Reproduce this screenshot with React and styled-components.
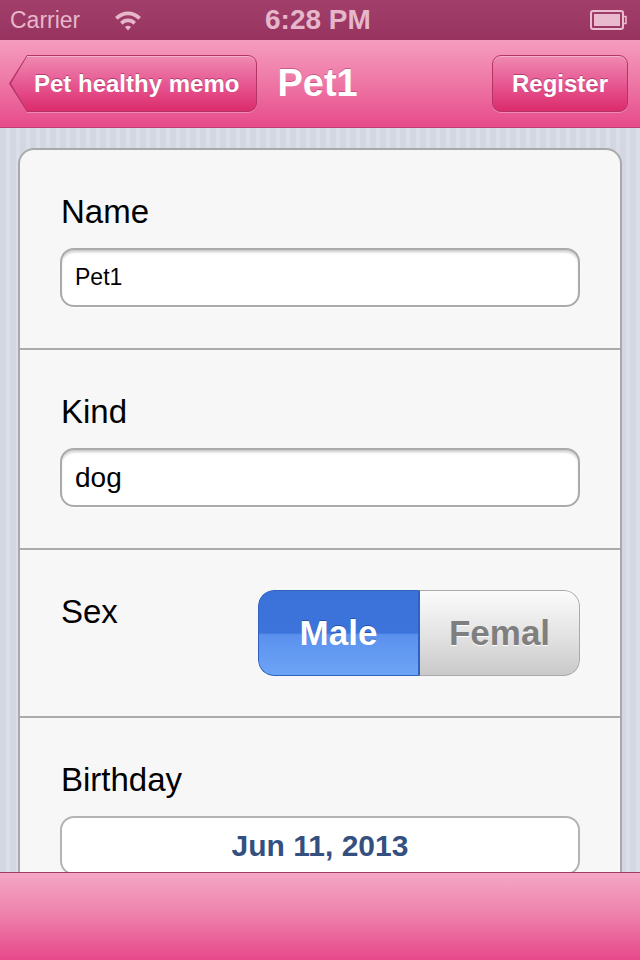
import React from "react"
import styled, { createGlobalStyle } from "styled-components"

const Global = createGlobalStyle`
  html, body {
    margin: 0;
    padding: 0;
  }
  body {
    font-family: "Liberation Sans", Arial, sans-serif;
  }
`

const Screen = styled.div`
  width: 640px;
  height: 960px;
  display: flex;
  flex-direction: column;
  overflow: hidden;
  background: #d5d9e2;
`

const StatusBar = styled.div`
  height: 40px;
  flex: none;
  display: flex;
  align-items: center;
  padding: 0 12px 0 10px;
  background: linear-gradient(#a13f6a, #983360);
  color: #e6b6ca;
`

const Carrier = styled.span`
  font-size: 23px;
  display: flex;
  align-items: center;
  gap: 33px;
  width: 255px;
`

const Clock = styled.span`
  font-size: 28px;
  font-weight: bold;
  flex: 1;
`

const NavBar = styled.div`
  height: 87px;
  flex: none;
  display: flex;
  align-items: center;
  padding: 0 12px 0 27px;
  background: linear-gradient(#f59dbe, #ee76a5 50%, #e74b8b);
  border-bottom: 1px solid #c23c72;
`

const BarButton = styled.button`
  position: relative;
  height: 57px;
  padding: 0 ${p => p.$padR}px 0 ${p => p.$padL}px;
  border: 1px solid #b33566;
  border-radius: ${p => (p.$back ? "0 9px 9px 0" : "9px")};
  ${p => p.$back && "border-left: none;"}
  background: linear-gradient(#f08ab1, #e65893 50%, #dc2b6b);
  box-shadow: inset 0 1px 0 rgba(255, 255, 255, 0.35), 0 1px 0 rgba(255, 255, 255, 0.3);
  color: #fff;
  font-family: "Liberation Sans", Arial, sans-serif;
  font-size: 24px;
  font-weight: bold;
  text-shadow: 0 -1px 0 rgba(120, 20, 60, 0.5);
  margin-left: ${p => (p.$right ? "auto" : "0")};

  ${p =>
    p.$back &&
    `
    &::before {
      content: "";
      position: absolute;
      left: -18px;
      top: -1px;
      width: 18px;
      height: 57px;
      background: #b33566;
      clip-path: polygon(100% 0, 0 50%, 100% 100%);
    }
    &::after {
      content: "";
      position: absolute;
      left: -16px;
      top: 0.5px;
      width: 16px;
      height: 54px;
      background: linear-gradient(#f08ab1, #e65893 50%, #dc2b6b);
      clip-path: polygon(100% 0, 0 50%, 100% 100%);
    }
  `}
`

const Title = styled.h1`
  margin: 0 0 0 20px;
  font-size: 38px;
  font-weight: bold;
  color: #fff;
  text-shadow: 0 -1px 0 rgba(140, 30, 70, 0.4);
`

const Content = styled.div`
  flex: 1;
  overflow: hidden;
  padding: 20px 18px 0;
  background: repeating-linear-gradient(90deg, #d3d7e1 0 6px, #dadee7 6px 10px);
`

const Card = styled.div`
  border: 2px solid #a9a9a9;
  border-radius: 16px;
  background: #f7f7f7;
  overflow: hidden;
`

const Section = styled.div`
  padding: 43px 40px 41px 40px;
  & + & {
    border-top: 2px solid #ababab;
  }
`

const Row = styled(Section)`
  display: flex;
  justify-content: space-between;
  align-items: flex-start;
  padding-top: 40px;
  padding-bottom: 40px;
`

const Label = styled.div`
  font-size: 33px;
  line-height: 38px;
  color: #000;
  padding-left: 1px;
  margin-bottom: ${p => (p.$inline ? 0 : 17)}px;
  margin-top: ${p => (p.$inline ? 3 : 0)}px;
`

const Field = styled.div`
  box-sizing: border-box;
  height: 59px;
  display: flex;
  align-items: center;
  justify-content: ${p => (p.$center ? "center" : "flex-start")};
  padding: 0 13px;
  border: 2px solid ${p => (p.$center ? "#b4b4b4" : "#aaaaaa")};
  border-radius: 14px;
  background: #fff;
  box-shadow: ${p => (p.$center ? "none" : "inset 0 3px 3px -1px rgba(0, 0, 0, 0.22), 0 1px 0 #fff")};
  font-size: ${p => p.$size}px;
  font-weight: ${p => (p.$center ? "bold" : "normal")};
  color: ${p => (p.$center ? "#34507f" : "#000")};
`

const Segmented = styled.div`
  display: flex;
  width: 322px;
  height: 86px;
  border-radius: 16px;
  overflow: hidden;
`

const Segment = styled.div`
  flex: 1;
  display: flex;
  align-items: center;
  justify-content: center;
  font-size: 35px;
  font-weight: bold;
  box-sizing: border-box;
  ${p =>
    p.$active
      ? `
    background: linear-gradient(#3b72d9, #3c74db 50%, #5a91ee 52%, #6ea4f6);
    border: 1px solid #2f61bd;
    border-right: 2px solid #2f62c0;
    border-radius: 16px 0 0 16px;
    color: #fff;
    text-shadow: 0 -1px 0 rgba(20, 50, 120, 0.5);
  `
      : `
    background: linear-gradient(#fbfbfb, #e2e2e2 55%, #c9c9c9);
    border: 1px solid #a9a9a9;
    border-left: none;
    border-radius: 0 16px 16px 0;
    color: #7f7f7f;
    text-shadow: 0 1px 0 #fff;
  `}
`

const Toolbar = styled.div`
  height: 87px;
  flex: none;
  border-top: 1px solid #a13b62;
  background: linear-gradient(#f5a7c5, #ee84ad 45%, #e7488a);
`

const Wifi = () => (
  <svg width="30" height="22" viewBox="0 0 29 22">
    <path d="M1.5 8 A18 18 0 0 1 27.5 8 L24.8 10.8 A14 14 0 0 0 4.2 10.8 Z" fill="#e6b6ca" />
    <path d="M6.5 13 A11 11 0 0 1 22.5 13 L19.8 15.8 A7 7 0 0 0 9.2 15.8 Z" fill="#e6b6ca" />
    <path d="M11.5 18 A4.2 4.2 0 0 1 17.5 18 L14.5 21.5 Z" fill="#e6b6ca" />
  </svg>
)

const Battery = () => (
  <svg width="38" height="20" viewBox="0 0 38 20">
    <rect x="1" y="1" width="32" height="18" rx="2" fill="none" stroke="#ebbdd0" strokeWidth="2" />
    <rect x="4" y="4" width="26" height="12" fill="#e9bacd" />
    <rect x="33" y="6.5" width="3" height="7" fill="none" stroke="#ebbdd0" strokeWidth="1.5" />
  </svg>
)

export default function App() {
  return (
    <Screen>
      <Global />
      <StatusBar>
        <Carrier>
          Carrier
          <Wifi />
        </Carrier>
        <Clock>6:28 PM</Clock>
        <Battery />
      </StatusBar>
      <NavBar>
        <BarButton $back $padL={7} $padR={17}>Pet healthy memo</BarButton>
        <Title>Pet1</Title>
        <BarButton $right $padL={19} $padR={19}>Register</BarButton>
      </NavBar>
      <Content>
        <Card>
          <Section>
            <Label>Name</Label>
            <Field $size={23}>Pet1</Field>
          </Section>
          <Section>
            <Label>Kind</Label>
            <Field $size={28}>dog</Field>
          </Section>
          <Row>
            <Label $inline>Sex</Label>
            <Segmented>
              <Segment $active>Male</Segment>
              <Segment>Femal</Segment>
            </Segmented>
          </Row>
          <Section>
            <Label>Birthday</Label>
            <Field $center $size={30}>Jun 11, 2013</Field>
          </Section>
        </Card>
      </Content>
      <Toolbar />
    </Screen>
  )
}
